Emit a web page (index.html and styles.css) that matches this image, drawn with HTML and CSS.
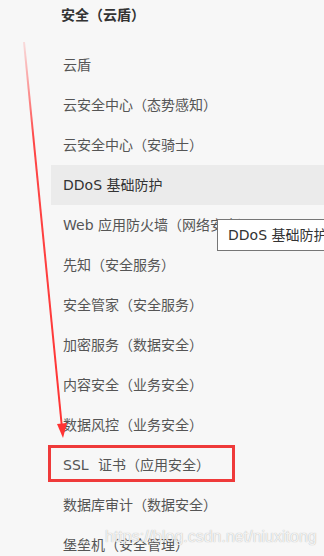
FILE: index.html
```html
<!DOCTYPE html>
<html lang="zh-CN">
<head>
	<meta charset="UTF-8">
	<title>安全（云盾）</title>
	<link rel="stylesheet" href="styles.css">
</head>
<body>
	<div id="main">
		<div class="menu">
			<h3 class="menu-title">安全（云盾）</h3>
			<ul class="menu-list">
				<li>云盾</li>
				<li>云安全中心（态势感知）</li>
				<li>云安全中心（安骑士）</li>
				<li class="active">DDoS 基础防护</li>
				<li>Web 应用防火墙（网络安全）</li>
				<li>先知（安全服务）</li>
				<li>安全管家（安全服务）</li>
				<li>加密服务（数据安全）</li>
				<li>内容安全（业务安全）</li>
				<li>数据风控（业务安全）</li>
				<li class="wide">SSL 证书（应用安全）</li>
				<li>数据库审计（数据安全）</li>
				<li>堡垒机（安全管理）</li>
			</ul>
		</div>
		<div class="tooltip">DDoS 基础防护</div>
		<div class="mark-box"></div>
		<svg class="mark-arrow" width="80" height="450" viewBox="0 0 80 450">
			<defs>
				<linearGradient id="fade" x1="0" y1="0" x2="0" y2="1">
					<stop offset="0" stop-color="#f44" stop-opacity="0.15"/>
					<stop offset="0.25" stop-color="#f33" stop-opacity="0.9"/>
					<stop offset="1" stop-color="#f33"/>
				</linearGradient>
			</defs>
			<line x1="24" y1="42" x2="62" y2="428" stroke="url(#fade)" stroke-width="2"/>
			<polygon points="57,424 67,423 63,438" fill="#f33"/>
		</svg>
		<div class="watermark">https://blog.csdn.net/niuxitong</div>
	</div>
</body>
</html>
```

FILE: styles.css
```css
*{ margin: 0; padding: 0; box-sizing: border-box;}
html, body{ width: 100%; height: 100%; overflow: hidden;}
body{ background: #f7f7f7; font-family: "DejaVu Sans", "Noto Sans CJK SC", sans-serif; font-size: 14px; color: #555;}
li{ list-style: none;}
#main{ position: relative; width: 100%; height: 100%;}
.menu{ padding-left: 51px;}
.menu-title{ height: 30px; line-height: 30px; padding-left: 10px; font-size: 14px; font-weight: 700; color: #333;}
.menu-list{ margin-top: 15px;}
.menu-list li{ height: 40px; line-height: 40px; padding-left: 12px; white-space: nowrap;}
.menu-list li.active{ background: #ebebeb; color: #333;}
.menu-list li.wide{ word-spacing: 5px;}
.tooltip{ position: absolute; left: 217px; top: 219px; padding: 0 10px; height: 32px; line-height: 30px; border: 1px solid #767676; background: #fff; color: #333; white-space: nowrap;}
.mark-box{ position: absolute; left: 48px; top: 445px; width: 187px; height: 37px; border: 3px solid #ef3a3a;}
.mark-arrow{ position: absolute; left: 0; top: 0;}
.watermark{ position: absolute; left: 105px; top: 528px; font-family: "Liberation Sans", Arial, sans-serif; font-size: 16px; color: rgba(255,255,255,0.85); text-shadow: 0 0 1px rgba(0,0,0,0.35); white-space: nowrap;}
```
